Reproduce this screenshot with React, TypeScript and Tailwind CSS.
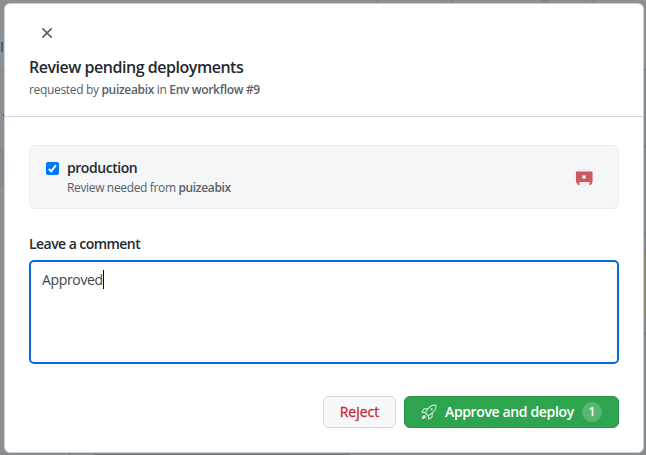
import type { ReactNode } from "react";
import { GoRocket } from "react-icons/go";

function TopEdge() {
  return (
    <div className="flex h-[3px] gap-2 pl-[376px]">
      <div className="h-[3px] w-[67px] rounded-b-[3px] border-x border-[#7d7f81]" />
      <div className="flex h-[3px] w-[134px] rounded-b-[3px] border-x border-[#7d7f81] pl-[90px]">
        <div className="h-[2px] w-2 rounded-b-full bg-[#7f8183]" />
      </div>
      <div className="h-[3px] flex-1 rounded-bl-[3px] border-l border-[#7d7f81]" />
    </div>
  );
}

function LeftEdge() {
  return (
    <div className="flex w-1 flex-col">
      <div className="mt-[39px] ml-px h-[10px] w-[2px] bg-[#3d6583]" />
      <div className="mt-[18px] h-px bg-[#828486]" />
      <div className="mt-[43px] h-[2px] w-px self-end bg-[#5a4c45]" />
      <div className="mt-[31px] h-10 bg-[#888a8e]" />
    </div>
  );
}

function RightEdge() {
  return (
    <div className="flex flex-1 flex-col bg-[#85888d]">
      <div className="h-[67px] border-b border-[#74777b] bg-[#8d8f90]" />
      <div className="h-[77px] border-b border-[#74777b]" />
      <div className="h-[87px] border-b border-[#74777b]" />
      <div className="mt-4 h-[67px] border-y border-[#827f63] bg-[#898b6c]" />
      <div className="h-[17px] border-b border-[#74777b]" />
    </div>
  );
}

function BottomEdge() {
  return (
    <div className="flex h-[2px] items-end bg-[#898b8c]">
      <div className="h-[2px] w-[70px] border-r border-[#74777b]" />
      <div className="ml-[23px] h-px w-[256px] bg-[#747a7b]" />
    </div>
  );
}

function Strong({ children }: { children: ReactNode }) {
  return <span className="font-semibold">{children}</span>;
}

function CloseIcon() {
  return (
    <svg className="size-4" viewBox="0 0 16 16" fill="none">
      <path d="M3.9 3.9L12.1 12.1M12.1 3.9L3.9 12.1" stroke="currentColor" strokeWidth="1.7" strokeLinecap="round" />
    </svg>
  );
}

function Avatar() {
  return (
    <svg className="size-5" viewBox="0 0 20 20">
      <circle cx="10" cy="10" r="10" fill="#eeeeee" />
      <path d="M2 4.5h16.5v10.5l-1.5 3h-1.5v-3h-10v3H4L2 15z" fill="#c95a61" />
      <path d="M8 8h4v4H8z" fill="#e3a9ab" />
      <path d="M9 9h2v2H9z" fill="#ffffff" />
    </svg>
  );
}

function Checkbox() {
  return (
    <span className="mt-1 flex size-[13px] shrink-0 items-center justify-center rounded-[2px] bg-[#0075ff]">
      <svg className="size-[13px]" viewBox="0 0 13 13" fill="none">
        <path d="M2.8 6.9L5.2 9.3L10 3.2" stroke="white" strokeWidth="1.9" />
      </svg>
    </span>
  );
}

export default function App() {
  return (
    <div className="flex h-[455px] w-[646px] flex-col overflow-hidden bg-[#8d8f90] font-['Open_Sans','Noto_Sans',sans-serif] text-[#24292e]">
      <TopEdge />
      <div className="flex h-[450px]">
        <LeftEdge />
        <div className="flex w-[640px] flex-col rounded-[6px] border border-[#c9d0d8] bg-white">
          <header className="h-[113px] shrink-0 border-b border-[#d0d7de] px-6 pt-[21px]">
            <button className="ml-[10px] block text-[#586069]">
              <CloseIcon />
            </button>
            <h1 className="mt-[14px] text-[16px] leading-6 font-semibold tracking-[-0.47px] whitespace-nowrap">
              Review pending deployments
            </h1>
            <p className="mt-[2px] text-[12px] leading-[18px] tracking-[-0.33px] whitespace-nowrap text-[#586069]">
              requested by <Strong>puizeabix</Strong> in <Strong>Env workflow #9</Strong>
            </p>
          </header>
          <main className="px-6 pt-7">
            <section className="flex h-16 items-center justify-between rounded-[6px] border border-[#eaecef] bg-[#f4f6f8] pr-6 pl-4">
              <div className="flex gap-2">
                <Checkbox />
                <div className="-mt-px">
                  <h2 className="text-[14px] leading-[21px] font-semibold tracking-[-0.45px]">production</h2>
                  <p className="text-[12px] leading-[19px] tracking-[-0.35px] whitespace-nowrap text-[#586069]">
                    Review needed from <Strong>puizeabix</Strong>
                  </p>
                </div>
              </div>
              <Avatar />
            </section>
            <label className="mt-6 block text-[14px] leading-[21px] font-semibold tracking-[-0.55px]">Leave a comment</label>
            <div className="mt-[6px] flex h-[104px] items-start rounded-[5px] border-2 border-[#0969da] px-[11px] pt-[7px]">
              <span className="text-[14px] leading-[21px] tracking-[-0.35px] text-[#40454a]">Approved</span>
              <span className="mt-px h-[19px] w-px bg-black" />
            </div>
            <div className="mt-8 flex justify-end gap-2">
              <button className="h-8 w-[73px] rounded-[6px] border border-[#d5d8da] bg-[#f6f8fa] text-[14px] leading-5 font-medium text-[#cb2431] [-webkit-text-stroke:0.3px_#cb2431]">
                Reject
              </button>
              <button className="flex h-8 w-[215px] items-center rounded-[6px] border border-[#2a9147] bg-[#2ea44f] pl-4 text-[14px] leading-5 font-semibold whitespace-nowrap text-white">
                <GoRocket className="size-4 text-[#d9f4e0]" />
                <span className="ml-2 tracking-[-0.36px]">Approve and deploy</span>
                <span className="mr-4 ml-auto flex size-5 items-center justify-center rounded-full bg-[#57b671] text-[12px] leading-5">1</span>
              </button>
            </div>
          </main>
        </div>
        <RightEdge />
      </div>
      <BottomEdge />
    </div>
  );
}
